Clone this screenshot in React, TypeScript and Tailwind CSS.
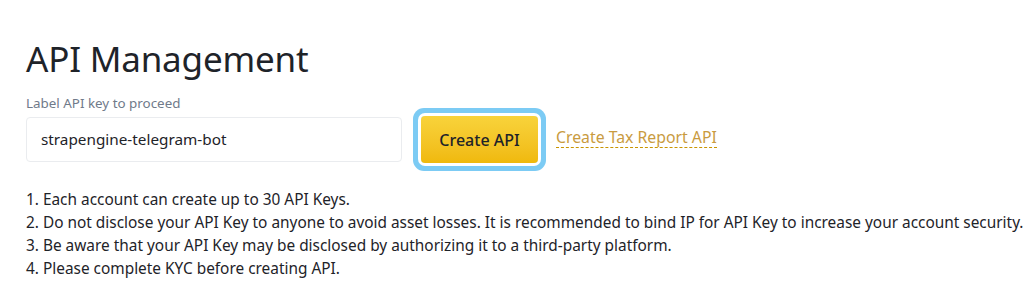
import React from "react";

export default function App() {
  const items = [
    "1. Each account can create up to 30 API Keys.",
    "2. Do not disclose your API Key to anyone to avoid asset losses. It is recommended to bind IP for API Key to increase your account security.",
    "3. Be aware that your API Key may be disclosed by authorizing it to a third-party platform.",
    "4. Please complete KYC before creating API.",
  ];
  return (
    <div
      className="w-[1024px] h-[306px] bg-white pl-[26px] pt-[36px] text-[#1e2329] overflow-hidden"
      style={{ fontFamily: '"Noto Sans", "Open Sans", sans-serif' }}
    >
      <h1 className="text-[35px] leading-[46px] font-normal tracking-[-0.2px]">API Management</h1>
      <div className="mt-[12px] text-[13.4px] leading-[18px] text-[#707a8a]">Label API key to proceed</div>
      <div className="mt-[4px] flex items-center">
        <div className="w-[376px] h-[45px] rounded-[4px] border border-[#eaecef] flex items-center px-[14px] text-[15.3px]">
          strapengine-telegram-bot
        </div>
        <button className="ml-[19px] w-[117px] h-[47px] rounded-[4px] bg-gradient-to-b from-[#f8d33a] to-[#f0b90b] text-[16px] font-medium text-[#1e2329] ring-[5px] ring-[#7ccbf4] ring-offset-[3px] ring-offset-white">
          Create API
        </button>
        <span className="ml-[18px] text-[15.8px] text-[#c99b3f] border-b border-dashed border-[#c99400] leading-[20px] -mt-[4px]">
          Create Tax Report API
        </span>
      </div>
      <div className="mt-[25px] text-[15.4px] leading-[23px]">
        {items.map((t) => (
          <div key={t} className="whitespace-nowrap">{t}</div>
        ))}
      </div>
    </div>
  );
}
